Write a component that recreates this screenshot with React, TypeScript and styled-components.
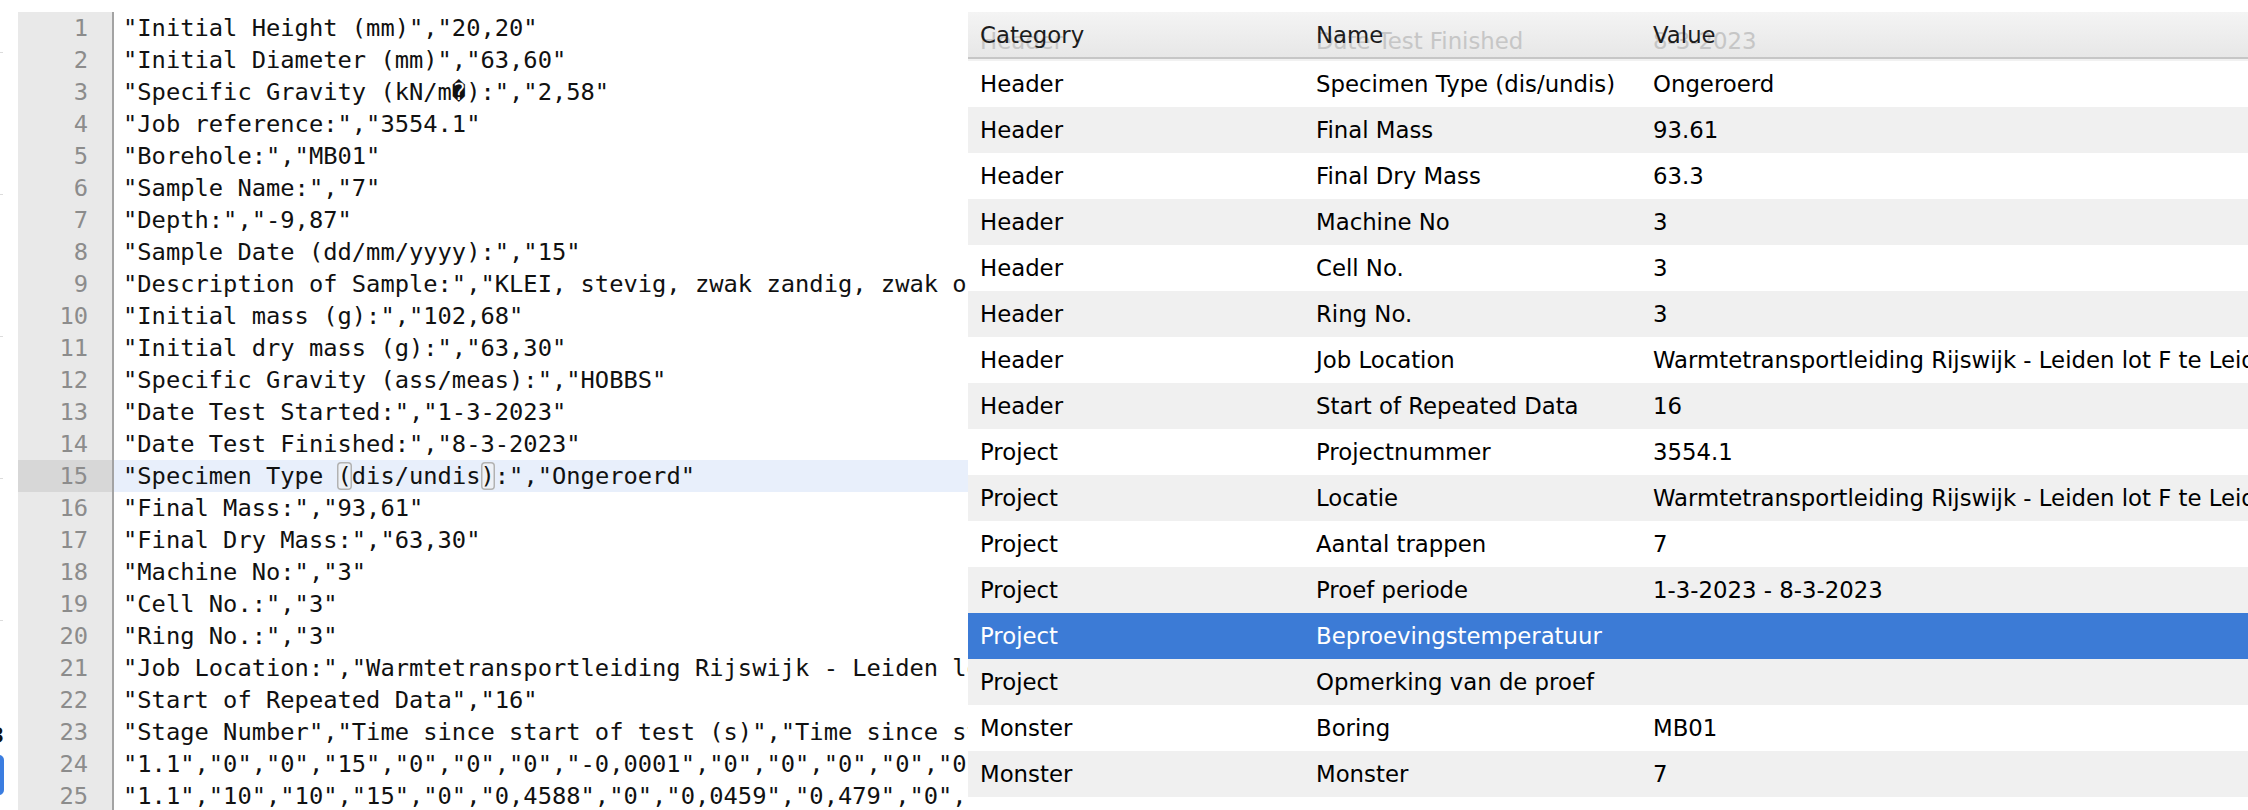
import React from "react";
import styled, { createGlobalStyle } from "styled-components";

const codeLines: string[] = [
    `"Initial Height (mm)","20,20"`,
    `"Initial Diameter (mm)","63,60"`,
    `"Specific Gravity (kN/m\uFFFD):","2,58"`,
    `"Job reference:","3554.1"`,
    `"Borehole:","MB01"`,
    `"Sample Name:","7"`,
    `"Depth:","-9,87"`,
    `"Sample Date (dd/mm/yyyy):","15"`,
    `"Description of Sample:","KLEI, stevig, zwak zandig, zwak organisch, grijs"`,
    `"Initial mass (g):","102,68"`,
    `"Initial dry mass (g):","63,30"`,
    `"Specific Gravity (ass/meas):","HOBBS"`,
    `"Date Test Started:","1-3-2023"`,
    `"Date Test Finished:","8-3-2023"`,
    `"Specimen Type (dis/undis):","Ongeroerd"`,
    `"Final Mass:","93,61"`,
    `"Final Dry Mass:","63,30"`,
    `"Machine No:","3"`,
    `"Cell No.:","3"`,
    `"Ring No.:","3"`,
    `"Job Location:","Warmtetransportleiding Rijswijk - Leiden lot F te Leiden"`,
    `"Start of Repeated Data","16"`,
    `"Stage Number","Time since start of test (s)","Time since start of stage (s)","Axial load (kN)"`,
    `"1.1","0","0","15","0","0","0","-0,0001","0","0","0","0","0","0","0"`,
    `"1.1","10","10","15","0","0,4588","0","0,0459","0,479","0","0","0","0"`,
];

const ACTIVE_LINE = 15;

type Row = { category: string; name: string; value: string };

const rows: Row[] = [
    { category: "Header", name: "Specimen Type (dis/undis)", value: "Ongeroerd" },
    { category: "Header", name: "Final Mass", value: "93.61" },
    { category: "Header", name: "Final Dry Mass", value: "63.3" },
    { category: "Header", name: "Machine No", value: "3" },
    { category: "Header", name: "Cell No.", value: "3" },
    { category: "Header", name: "Ring No.", value: "3" },
    { category: "Header", name: "Job Location", value: "Warmtetransportleiding Rijswijk - Leiden lot F te Leiden" },
    { category: "Header", name: "Start of Repeated Data", value: "16" },
    { category: "Project", name: "Projectnummer", value: "3554.1" },
    { category: "Project", name: "Locatie", value: "Warmtetransportleiding Rijswijk - Leiden lot F te Leiden" },
    { category: "Project", name: "Aantal trappen", value: "7" },
    { category: "Project", name: "Proef periode", value: "1-3-2023 - 8-3-2023" },
    { category: "Project", name: "Beproevingstemperatuur", value: "" },
    { category: "Project", name: "Opmerking van de proef", value: "" },
    { category: "Monster", name: "Boring", value: "MB01" },
    { category: "Monster", name: "Monster", value: "7" },
    { category: "", name: "", value: "" },
];

const SELECTED_ROW = 12;

// line 15 has a matched bracket pair, drawn as small boxes
const renderLine = (text: string, n: number) => {
    if (n !== ACTIVE_LINE) return text;
    const open = text.indexOf("(");
    const close = text.indexOf(")");
    return (
        <>
            {text.slice(0, open)}
            <BracketMark>(</BracketMark>
            {text.slice(open + 1, close)}
            <BracketMark>)</BracketMark>
            {text.slice(close + 1)}
        </>
    );
};

const App: React.FC = () => {
    return (
        <>
            <GlobalStyles />
            <Screen>
                <BehindStrip>
                    {[0, 1, 2, 3, 4].map((i) => (
                        <Tick key={i} $first={i === 0} />
                    ))}
                    <CutGlyph>3</CutGlyph>
                    <CutButton />
                </BehindStrip>

                <Editor>
                    <Gutter>
                        {codeLines.map((_, i) => (
                            <LineNo key={i} $active={i + 1 === ACTIVE_LINE}>
                                {i + 1}
                            </LineNo>
                        ))}
                    </Gutter>
                    <Code>
                        {codeLines.map((line, i) => (
                            <CodeLine key={i} $active={i + 1 === ACTIVE_LINE}>
                                {renderLine(line, i + 1)}
                            </CodeLine>
                        ))}
                    </Code>
                </Editor>

                <Table>
                    <HeaderRow>
                        <DragGhost>
                            <GhostCell>Header</GhostCell>
                            <GhostCell>Date Test Finished</GhostCell>
                            <GhostCell>8-3-2023</GhostCell>
                        </DragGhost>
                        <HeaderCell>Category</HeaderCell>
                        <HeaderCell>Name</HeaderCell>
                        <HeaderCell>Value</HeaderCell>
                    </HeaderRow>
                    <HeaderGap />
                    {rows.map((r, i) => (
                        <DataRow key={i} $striped={i % 2 === 1} $selected={i === SELECTED_ROW}>
                            <Cell>{r.category}</Cell>
                            <Cell>{r.name}</Cell>
                            <Cell>{r.value}</Cell>
                        </DataRow>
                    ))}
                </Table>
            </Screen>
        </>
    );
};

const GlobalStyles = createGlobalStyle`
    html, body {
        margin: 0;
        padding: 0;
        background: #fff;
    }
    body {
        overflow: hidden;
    }
`;

const Screen = styled.div`
    display: flex;
    align-items: flex-start;
    width: 2248px;
    height: 810px;
    padding-top: 12px;
    box-sizing: border-box;
    overflow: hidden;
    background: #fff;
`;

const BehindStrip = styled.div`
    width: 18px;
    flex-shrink: 0;
    display: flex;
    flex-direction: column;
    padding-top: 40px;
    overflow: hidden;
`;

const Tick = styled.div<{ $first?: boolean }>`
    width: 3px;
    height: 1px;
    background: #dcdcdc;
    margin-top: ${(p) => (p.$first ? 0 : 141)}px;
`;

const CutGlyph = styled.div`
    margin-top: 104px;
    margin-left: -11px;
    font-family: "DejaVu Sans", sans-serif;
    font-weight: bold;
    font-size: 22px;
    line-height: 22px;
    color: #111;
`;

const CutButton = styled.div`
    margin-top: 8px;
    margin-left: -10px;
    width: 14px;
    height: 40px;
    border-radius: 5px;
    background: #3b7de0;
`;

const Editor = styled.div`
    width: 950px;
    height: 800px;
    flex-shrink: 0;
    display: flex;
    overflow: hidden;
    font-family: "DejaVu Sans Mono", "Liberation Mono", monospace;
    font-size: 23.75px;
`;

const Gutter = styled.div`
    width: 94px;
    flex-shrink: 0;
    background: #e9e9e9;
    border-right: 2px solid #a3a3a3;
`;

const LineNo = styled.div<{ $active?: boolean }>`
    height: 32px;
    line-height: 32px;
    text-align: right;
    padding-right: 24px;
    color: #8c8c8c;
    background: ${(p) => (p.$active ? "#d7d7d7" : "transparent")};
`;

const Code = styled.div`
    flex: 1;
    min-width: 0;
`;

const CodeLine = styled.div<{ $active?: boolean }>`
    height: 32px;
    line-height: 32px;
    padding-left: 9px;
    white-space: pre;
    color: #111;
    background: ${(p) => (p.$active ? "#e8effb" : "transparent")};
`;

const BracketMark = styled.span`
    border-radius: 4px;
    box-shadow: inset 0 0 0 1.5px #b2b2b2;
    background: #eef1f6;
`;

const Table = styled.div`
    flex: 1;
    min-width: 0;
    display: flex;
    flex-direction: column;
    font-family: "DejaVu Sans", "Lucida Grande", sans-serif;
    font-size: 22.8px;
    color: #000;
`;

const columns = "336px 337px 1fr";

const HeaderRow = styled.div`
    position: relative;
    flex-shrink: 0;
    display: grid;
    grid-template-columns: ${columns};
    height: 45px;
    align-items: center;
    background: linear-gradient(#f4f4f4, #e7e7e7);
    border-bottom: 2px solid #c6c6c6;
    overflow: hidden;
`;

const HeaderGap = styled.div`
    flex-shrink: 0;
    height: 2px;
    background: #f1f1f1;
`;

const HeaderCell = styled.div`
    position: relative;
    padding-left: 12px;
    color: #1c1c1c;
    white-space: nowrap;
`;

// row being dragged, shown faintly under the column titles
const DragGhost = styled.div`
    position: absolute;
    inset: 6px 0 -6px 0;
    display: grid;
    grid-template-columns: ${columns};
    align-items: center;
    color: #c6c6c6;
`;

const GhostCell = styled.div`
    padding-left: 12px;
    white-space: nowrap;
`;

const DataRow = styled.div<{ $striped?: boolean; $selected?: boolean }>`
    display: grid;
    grid-template-columns: ${columns};
    height: 46px;
    flex-shrink: 0;
    align-items: center;
    background: ${(p) => (p.$selected ? "#3c7bd6" : p.$striped ? "#f0f0f0" : "#fff")};
    color: ${(p) => (p.$selected ? "#fff" : "#000")};
`;

const Cell = styled.div`
    padding-left: 12px;
    white-space: nowrap;
    overflow: hidden;
`;

export default App;
